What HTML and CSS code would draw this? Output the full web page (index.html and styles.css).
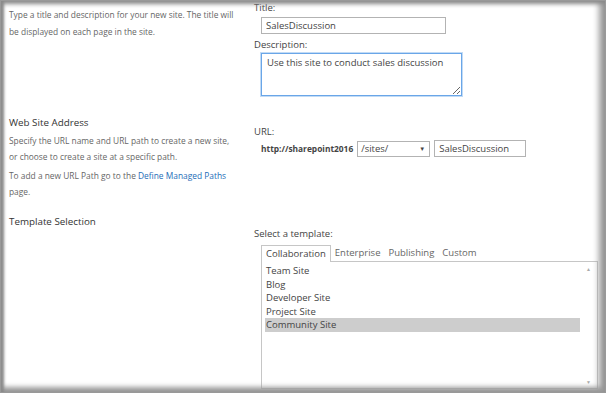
FILE: index.html
```html
<!DOCTYPE html>
<html lang="en">
<head>
    <meta charset="UTF-8">
    <title>New Site</title>
    <link rel="stylesheet" href="styles.css">
</head>
<body>
    <div class="frame">
        <div class="section first">
            <div class="info">
                <p>Type a title and description for your new site. The title will be displayed on each page in the site.</p>
            </div>
            <div class="fields">
                <div class="label">Title:</div>
                <input class="text title-input" type="text" value="SalesDiscussion">
                <div class="label">Description:</div>
                <textarea class="desc">Use this site to conduct sales discussion</textarea>
            </div>
        </div>

        <div class="section address">
            <div class="info">
                <h3>Web Site Address</h3>
                <p>Specify the URL name and URL path to create a new site, or choose to create a site at a specific path.</p>
                <p>To add a new URL Path go to the <a href="#">Define Managed Paths</a> page.</p>
            </div>
            <div class="fields">
                <div class="label">URL:</div>
                <div class="url-row">
                    <span class="host">http://sharepoint2016</span>
                    <div class="select"><span>/sites/</span><span class="arrow">&#9660;</span></div>
                    <input class="text url-input" type="text" value="SalesDiscussion">
                </div>
            </div>
        </div>

        <div class="section template">
            <div class="info">
                <h3>Template Selection</h3>
            </div>
            <div class="fields">
                <div class="label">Select a template:</div>
                <div class="tabs">
                    <span class="tab active">Collaboration</span>
                    <span class="tab">Enterprise</span>
                    <span class="tab">Publishing</span>
                    <span class="tab">Custom</span>
                </div>
                <div class="listbox">
                    <ul>
                        <li>Team Site</li>
                        <li>Blog</li>
                        <li>Developer Site</li>
                        <li>Project Site</li>
                        <li class="selected">Community Site</li>
                    </ul>
                    <div class="scroll">
                        <span class="up">&#9650;</span>
                        <span class="down">&#9660;</span>
                    </div>
                </div>
            </div>
        </div>
    </div>
</body>
</html>
```

FILE: styles.css
```css
html, body {
    margin: 0;
    padding: 0;
    background: #fff;
}
body {
    font-family: 'Open Sans', 'Noto Sans', sans-serif;
    font-size: 9.5px;
    color: #444;
}
.frame {
    position: relative;
    width: 606px;
    height: 393px;
    box-sizing: border-box;
    overflow: hidden;
    background: #fff;
    border: 1px solid #999;
}
/* the screenshot's shadowed edge sits over the content */
.frame::after {
    content: "";
    position: absolute;
    inset: 0;
    pointer-events: none;
    box-shadow: inset 0 4px 4px -1px #8a8a8a,
                inset 4px 0 3px -1px #8a8a8a,
                inset -9px 0 6px -3px #9a9a9a,
                inset 0 -7px 5px -2px #9a9a9a;
}
.section {
    display: flex;
}
.info {
    width: 227px;
    padding-left: 8px;
    padding-right: 18px;
}
.info p {
    margin: 0 0 3px;
    font-size: 8.4px;
    line-height: 16px;
    color: #666;
}
.info h3 {
    margin: 0 0 2px;
    font-size: 9.8px;
    font-weight: normal;
    color: #333;
    line-height: 16px;
}
.info a {
    color: #1e6db8;
    text-decoration: none;
}
.fields {
    flex: 1;
}
.label {
    line-height: 14px;
    color: #444;
}
.text {
    display: block;
    font-family: inherit;
    font-size: 9.5px;
    color: #444;
    border: 1px solid #b3b3b3;
    padding: 0 4px;
    height: 17px;
    box-sizing: border-box;
    margin-left: 7px;
    outline: none;
}
.first {
    height: 114px;
}
.first .info {
    padding-top: 5px;
}
.first .info p {
    line-height: 17px;
}
.title-input {
    width: 185px;
    margin-top: 2px;
    margin-bottom: 4px;
}
.desc {
    display: block;
    width: 201px;
    height: 43px;
    box-sizing: border-box;
    margin: 1px 0 0 7px;
    border: 1px solid #6aa6e8;
    box-shadow: 0 0 0 1px #c2dbf5;
    outline: none;
    padding: 2px 5px;
    font-family: inherit;
    font-size: 9.5px;
    color: #444;
    resize: both;
}
.address {
    height: 99px;
}
.address .fields {
    padding-top: 10px;
}
.url-row {
    display: flex;
    align-items: center;
    margin-left: 7px;
    margin-top: 1px;
}
.host {
    font-weight: bold;
    font-size: 8.4px;
    color: #444;
    margin-right: 4px;
}
.select {
    width: 73px;
    height: 16px;
    box-sizing: border-box;
    border: 1px solid #b3b3b3;
    display: flex;
    justify-content: space-between;
    align-items: center;
    padding: 0 4px 0 3px;
    margin-right: 4px;
}
.select .arrow {
    font-size: 6px;
    color: #444;
}
.url-input {
    margin-left: 0;
    width: 92px;
}
.template .fields {
    padding-top: 13px;
}
.tabs {
    display: flex;
    margin-left: 7px;
    margin-top: 3px;
    height: 17px;
    align-items: flex-end;
}
.tab {
    padding: 0 4px;
    line-height: 16px;
    color: #666;
}
.tab.active {
    border: 1px solid #c6c6c6;
    border-bottom: none;
    background: #fff;
    color: #444;
    position: relative;
    top: 1px;
}
.listbox {
    margin-left: 7px;
    width: 337px;
    height: 128px;
    box-sizing: border-box;
    border: 1px solid #c6c6c6;
    display: flex;
}
.listbox ul {
    list-style: none;
    margin: 0;
    padding: 2px 0 0 3px;
    flex: 1;
}
.listbox li {
    line-height: 13.5px;
    padding-left: 1px;
    color: #444;
}
.listbox li.selected {
    background: #cdcdcd;
}
.scroll {
    width: 17px;
    display: flex;
    flex-direction: column;
    justify-content: space-between;
    align-items: center;
    color: #aaa;
    font-size: 5px;
    padding: 4px 0 3px;
}
```
